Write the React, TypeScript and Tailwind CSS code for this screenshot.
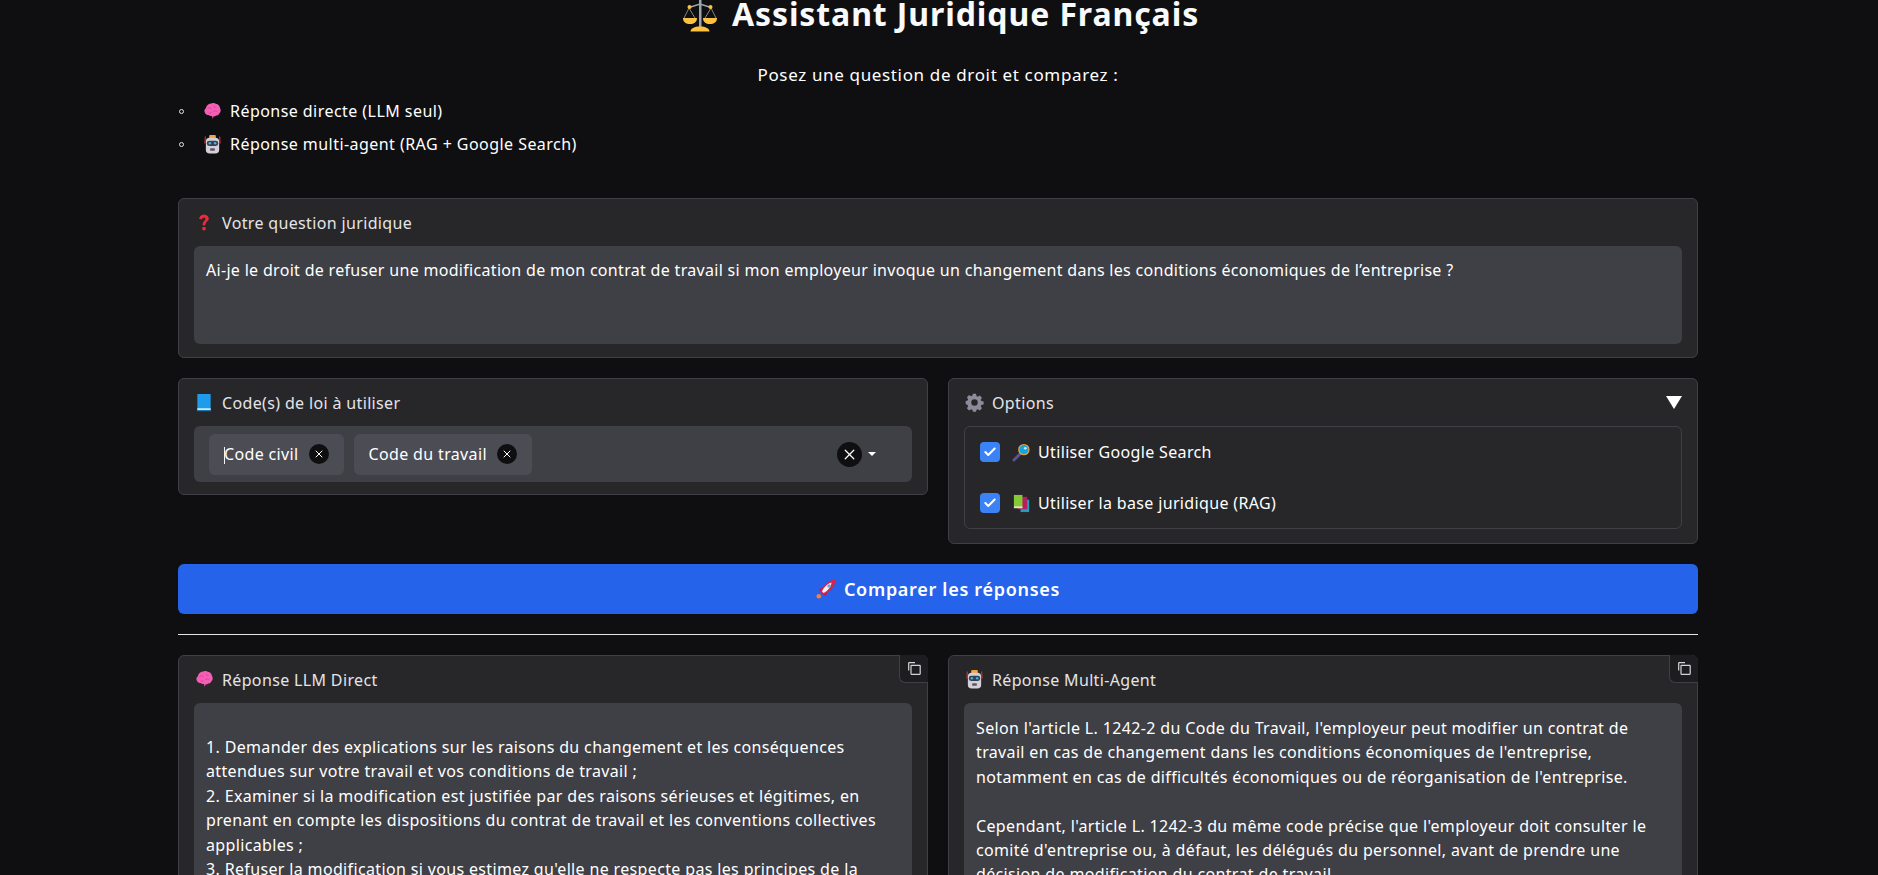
import React from 'react';
import { Check, X } from 'lucide-react';

const Brain = () => (
  <svg viewBox="0 0 20 20" className="w-[19px] h-[19px] shrink-0">
    <path d="M3 6.500C3.500 3.500 6 1.500 9 1.500c1.200-.8 3.500-.6 4.500.3 2.500.3 4.300 2.400 4.500 4.700 1 1.500.8 3.800-.5 5-.5 1.500-2 2.700-3.700 2.800-.9.800-2 1-2.800.8L10.500 18 9.300 14.800c-1.300.2-2.600-.2-3.500-1-1.800 0-3.500-1.300-4-3-.7-1.500-.2-3.300 1.200-4.300z" fill="#f45eb4" />
    <path d="M5 7c1.500-1.500 3-.5 4 0m2 3c1.500-1 3-.5 4 .5M6 11.500c1 .5 2 .5 3-.5M11 4.500c1 1 2 1 3 .5" stroke="#d63f96" strokeWidth="0.9" fill="none" />
  </svg>
);

const Robot = () => (
  <svg viewBox="0 0 20 20" className="w-[19px] h-[19px] shrink-0">
    <rect x="6.500" y="0" width="7" height="3.500" rx="1" fill="#f0a63a" />
    <path d="M2.500 1.500L2 9M17.500 1.500L18 9" stroke="#c9332d" strokeWidth="1.200" fill="none" />
    <rect x="3" y="3" width="14" height="16.500" rx="4" fill="#d5cfd8" />
    <rect x="4" y="6" width="12" height="5.500" rx="2.500" fill="#37404f" />
    <circle cx="7.200" cy="8.700" r="1.300" fill="#38b6ee" />
    <circle cx="12.800" cy="8.700" r="1.300" fill="#38b6ee" />
    <rect x="7.500" y="14" width="5" height="2.500" rx="0.500" fill="#5b5763" />
  </svg>
);

const Scales = () => (
  <svg viewBox="0 0 34 32" className="w-[34px] h-[32px] shrink-0">
    <rect x="16" y="0" width="2.500" height="28" fill="#9aa5ad" />
    <path d="M6 7.500L17 4l11 3.500" stroke="#9aa5ad" strokeWidth="1.600" fill="none" />
    <path d="M6 8L1 18M6 8l6 10M28 8l-6 10M28 8l5 10" stroke="#9aa5ad" strokeWidth="0.800" fill="none" />
    <path d="M0 18h14c0 4-3 6-7 6s-7-2-7-6zM20 18h14c0 4-3 6-7 6s-7-2-7-6z" fill="#fcc13d" />
    <circle cx="6.500" cy="7" r="2" fill="#fcc13d" />
    <circle cx="27.500" cy="7" r="2" fill="#fcc13d" />
    <path d="M7.500 31.500c0-3 4-5 9.500-5s9.500 2 9.500 5z" fill="#fcc13d" />
  </svg>
);

const Question = () => (
  <svg viewBox="0 0 14 20" className="w-[14px] h-[19px] shrink-0">
    <path d="M2.500 6c0-2.500 2-3.800 4.500-3.800S11.500 3.500 11.500 6C11.500 9 8 9 8 12.500H6C6 8.500 9 8.500 9 6c0-1-.8-1.600-2-1.600S5 5 5 6z" fill="#ee2b3b" stroke="#ee2b3b" />
    <circle cx="7" cy="16.500" r="1.900" fill="#ee2b3b" />
  </svg>
);

const Book = () => (
  <svg viewBox="0 0 18 20" className="w-[18px] h-[19px] shrink-0">
    <path d="M2 1h14v17H3.500C2.500 18 2 17.500 2 16.500z" fill="#1e9bea" />
    <rect x="2" y="16" width="14" height="2.500" fill="#c9e6f8" />
    <rect x="2" y="18" width="14" height="1.200" fill="#1173b5" />
  </svg>
);

const Gear = () => (
  <svg viewBox="0 0 20 20" className="w-[19px] h-[19px] shrink-0">
    <path d="M8.200 1h3.600l.5 2.600 1.500.7 2.300-1.400 2.500 2.500-1.400 2.300.6 1.500 2.700.5v3.600l-2.700.5-.6 1.500 1.400 2.300-2.500 2.500-2.300-1.400-1.500.6-.5 2.200H8.200l-.5-2.200-1.500-.6-2.300 1.400-2.500-2.500 1.400-2.300-.6-1.500L0 12.800V9.200l2.200-.5.600-1.500L1.400 4.900 3.900 2.400l2.300 1.400 1.500-.7z" transform="scale(.92) translate(.8 -.1)" fill="#8f8a99" />
    <circle cx="10" cy="10" r="3.400" fill="#27272a" />
  </svg>
);

const Magnifier = () => (
  <svg viewBox="0 0 20 20" className="w-[19px] h-[19px] shrink-0">
    <path d="M2 18l7-7" stroke="#62518e" strokeWidth="3" strokeLinecap="round" />
    <circle cx="12.500" cy="7" r="6" fill="#e9a33b" />
    <circle cx="12.500" cy="7" r="4.800" fill="#12a5e6" />
    <circle cx="14" cy="5.500" r="1.400" fill="#cdeefb" />
  </svg>
);

const Books = () => (
  <svg viewBox="0 0 20 20" className="w-[19px] h-[19px] shrink-0">
    <rect x="9" y="6" width="9" height="13" fill="#1c9fc4" />
    <rect x="6" y="3" width="10" height="13" fill="#b61e5f" />
    <rect x="2" y="1" width="9" height="13" fill="#86c934" />
    <rect x="2" y="13" width="9" height="2" fill="#d9e8c2" />
  </svg>
);

const Rocket = () => (
  <svg viewBox="0 0 20 20" className="w-[20px] h-[20px] shrink-0">
    <circle cx="2.800" cy="17.200" r="2.300" fill="#f0804a" />
    <path d="M7 8L2.500 10.500 5 13zM12 13l-2.500 4.500L7 15z" fill="#c51e4b" />
    <path d="M4.500 13.500C5.500 8 11 1.500 19.500.5 19 9 12.500 14.500 6.500 15.500z" fill="#d5234f" />
    <path d="M6 12.500C7.500 8.500 11.500 4.500 15.500 3.500 15 8 11.500 12 7.500 14z" fill="#f2f3f6" />
    <circle cx="13" cy="7" r="1.800" fill="#6fa8dc" />
  </svg>
);

// gradio's copy glyph: a square sheet with a corner bracket behind it
const CopyGlyph = () => (
  <svg viewBox="0 0 13 13" className="w-[13px] h-[13px]" fill="none" stroke="#d4d4d8" strokeWidth="1.200">
    <rect x="3" y="3.300" width="9.200" height="9" rx="0.500" />
    <path d="M.7 8.500V1.200C.7.900.9.700 1.200.7H7" />
  </svg>
);

function Card({ children, className = '' }: { children: React.ReactNode; className?: string }) {
  return (
    <div className={`relative bg-[#27272a] border border-[#3f3f46] rounded-md px-[15px] ${className}`}>
      {children}
    </div>
  );
}

function Label({ icon, text }: { icon: React.ReactNode; text: string }) {
  return (
    <div className="flex items-center gap-[8px] h-[47px] text-[#e4e4e7]">
      <span className="flex items-center justify-center w-[20px]">{icon}</span>
      <span>{text}</span>
    </div>
  );
}

function Chip({ label, caret = false }: { label: string; caret?: boolean }) {
  return (
    <div className="relative flex items-center gap-[10px] h-[41px] px-[15px] bg-[#52525b]/70 rounded-md text-white">
      {caret && <span className="absolute left-[15px] top-[13px] w-px h-[17px] bg-[#f4f4f5]" />}
      <span>{label}</span>
      <span className="flex items-center justify-center w-[20px] h-[20px] rounded-full bg-[#0f0f11]">
        <X size={12} strokeWidth={2} />
      </span>
    </div>
  );
}

function OptionRow({ icon, label }: { icon: React.ReactNode; label: string }) {
  return (
    <div className="flex items-center h-[20px]">
      <span className="flex items-center justify-center w-[20px] h-[20px] rounded bg-[#3b82f6]">
        <Check size={14} strokeWidth={3.5} />
      </span>
      <span className="ml-[12px] mr-[7px]">{icon}</span>
      <span>{label}</span>
    </div>
  );
}

function ResultCard({ icon, title, children }: { icon: React.ReactNode; title: string; children: React.ReactNode }) {
  return (
    <Card className="flex-1 min-w-0 h-[260px]">
      <div className="absolute -right-px -top-px flex items-center justify-center w-[29px] h-[28px] border-l border-b border-[#3f3f46] rounded-bl-md rounded-tr-md bg-[#1d1d20]">
        <CopyGlyph />
      </div>
      <Label icon={icon} text={title} />
      <div className="bg-[#3f3f46] rounded-md px-[12px] pt-[8px] h-[300px] leading-[24.4px] text-white">
        {children}
      </div>
    </Card>
  );
}

function Bullet({ icon, text }: { icon: React.ReactNode; text: string }) {
  return (
    <li className="flex items-center h-[24px]">
      <span className="w-[5px] h-[5px] border border-[#e4e4e7] rounded-full ml-[1px]" />
      <span className="ml-[19px] mr-[8px]">{icon}</span>
      {text}
    </li>
  );
}

export default function App() {
  return (
    <div className="h-[875px] overflow-hidden bg-[#0f0f11] text-white text-[16px] tracking-[0.35px] font-['Noto_Sans',sans-serif] pl-[178px] pr-[180px]">
      <h1 className="flex items-center justify-center gap-[15px] h-[32px] ml-[6px] text-[32px] leading-[28px] tracking-[0.9px] font-bold text-[#f8fafc]">
        <Scales />
        <span className="pb-[5px]">Assistant Juridique Français</span>
      </h1>
      <p className="text-center mt-[31px] leading-[24px] text-[17px] tracking-[0.65px]">Posez une question de droit et comparez :</p>
      <ul className="mt-[12px] leading-[24px] tracking-[0.45px] space-y-[9px]">
        <Bullet icon={<Brain />} text="Réponse directe (LLM seul)" />
        <Bullet icon={<Robot />} text="Réponse multi-agent (RAG + Google Search)" />
      </ul>

      <Card className="mt-[42px] h-[160px]">
        <Label icon={<Question />} text="Votre question juridique" />
        <div className="bg-[#3f3f46] rounded-md h-[98px] px-[12px] pt-[12px] leading-[24px] tracking-[0.31px]">
          Ai-je le droit de refuser une modification de mon contrat de travail si mon employeur invoque un changement dans les conditions économiques de l’entreprise ?
        </div>
      </Card>

      <div className="flex items-start gap-[20px] mt-[20px]">
        <Card className="flex-1 h-[117px]">
          <Label icon={<Book />} text="Code(s) de loi à utiliser" />
          <div className="flex items-center gap-[10px] h-[56px] px-[15px] bg-[#3f3f46] rounded-md">
            <Chip label="Code civil" caret />
            <Chip label="Code du travail" />
            <div className="ml-auto flex items-center gap-[6px] pr-[21px]">
              <span className="flex items-center justify-center w-[25px] h-[25px] rounded-full bg-[#0f0f11]">
                <X size={17} strokeWidth={1.75} />
              </span>
              <span className="w-0 h-0 border-x-[4px] border-x-transparent border-t-[4px] border-t-white" />
            </div>
          </div>
        </Card>
        <Card className="flex-1 h-[166px]">
          <div className="flex items-center justify-between">
            <Label icon={<Gear />} text="Options" />
            <span className="w-0 h-0 border-x-[8px] border-x-transparent border-t-[13px] border-t-white" />
          </div>
          <div className="flex flex-col gap-[31px] h-[103px] border border-[#3f3f46] rounded-md px-[15px] pt-[15px]">
            <OptionRow icon={<Magnifier />} label="Utiliser Google Search" />
            <OptionRow icon={<Books />} label="Utiliser la base juridique (RAG)" />
          </div>
        </Card>
      </div>

      <button className="flex items-center justify-center gap-[8px] w-full h-[50px] mt-[20px] bg-[#2563eb] rounded-md text-[18px] tracking-[0.7px] font-semibold text-white">
        <Rocket />
        Comparer les réponses
      </button>

      <hr className="mt-[20px] border-t border-[#e4e4e7]" />

      <div className="flex items-start gap-[20px] mt-[20px]">
        <ResultCard icon={<Brain />} title="Réponse LLM Direct">
          <p className="mt-[24px]">
            1. Demander des explications sur les raisons du changement et les conséquences attendues sur votre travail et vos conditions de travail ;
            <br />
            2. Examiner si la modification est justifiée par des raisons sérieuses et légitimes, en prenant en compte les dispositions du contrat de travail et les conventions collectives applicables ;
            <br />
            3. Refuser la modification si vous estimez qu'elle ne respecte pas les principes de la
          </p>
        </ResultCard>
        <ResultCard icon={<Robot />} title="Réponse Multi-Agent">
          <p className="mt-[5px]">
            Selon l'article L. 1242-2 du Code du Travail, l'employeur peut modifier un contrat de travail en cas de changement dans les conditions économiques de l'entreprise, notamment en cas de difficultés économiques ou de réorganisation de l'entreprise.
          </p>
          <p className="mt-[24.400px]">
            Cependant, l'article L. 1242-3 du même code précise que l'employeur doit consulter le comité d'entreprise ou, à défaut, les délégués du personnel, avant de prendre une décision de modification du contrat de travail.
          </p>
        </ResultCard>
      </div>
    </div>
  );
}
